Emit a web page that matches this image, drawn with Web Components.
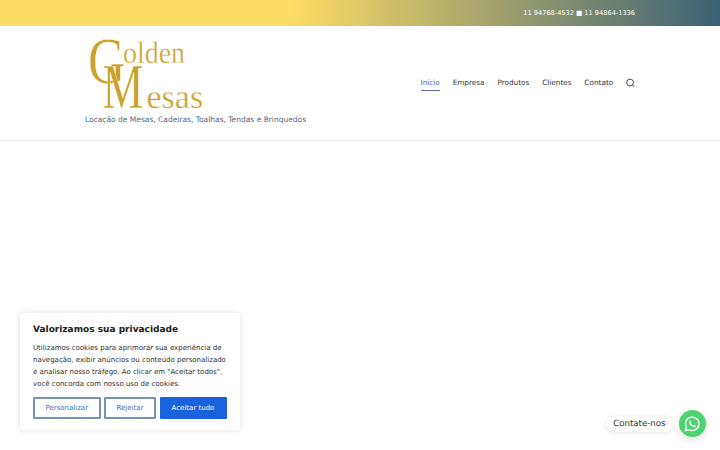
<!DOCTYPE html>
<html lang="pt"><head><meta charset="utf-8"><style>
html,body{margin:0;padding:0;background:#fff;font-family:"DejaVu Sans",sans-serif;overflow:hidden;text-rendering:geometricPrecision}
body{width:720px;height:450px;position:relative}
</style></head><body>
<gm-topbar>11 94768-4532 ■ 11 94864-1336</gm-topbar>
<gm-header></gm-header>
<gm-cookie></gm-cookie>
<gm-chat></gm-chat>
<script>
function def(n,html){customElements.define(n,class extends HTMLElement{constructor(){super();this.attachShadow({mode:'open'}).innerHTML=html}})}
def('gm-topbar',`<style>:host{display:flex;justify-content:flex-end;align-items:center;box-sizing:border-box;height:26px;padding:0 85px 0 0;background:linear-gradient(90deg,#ffdd65 0%,#ffdd65 40%,#3a6175 100%);color:#fff;font-size:6.6px}</style><slot></slot>`);
def('gm-logo',`<style>:host{display:block;width:125px;height:76px}svg{display:block;overflow:visible}
text{font-family:"Liberation Serif",serif;fill:#cda22c;stroke:#fff;stroke-width:.35px}</style>
<svg width="125" height="76" viewBox="0 0 125 76">
<text transform="translate(1 47) scale(.78 1)" font-size="66">G</text>
<text transform="translate(36 27) scale(.9 1)" font-size="31">olden</text>
<text transform="translate(15.500 72) scale(.72 1)" font-size="64">M</text>
<text x="59.500" y="72" font-size="34">esas</text>
</svg>`);
def('gm-header',`<style>:host{display:flex;justify-content:space-between;box-sizing:border-box;height:115px;padding:0 85px;border-bottom:1px solid #f0f1f3}
.brand{display:flex;flex-direction:column;align-items:flex-start;padding-top:10px}
gm-logo{margin-left:2px}
.tag{font-size:7.5px;line-height:10px;color:#5a6478;margin-top:3px;white-space:nowrap}
nav{display:flex;align-items:center;gap:12.8px;font-size:7.3px;color:#2f343c;height:113px}
a{display:block;padding:4px 0 3px;border-bottom:1.500px solid transparent}
a.on{color:#4d5ea8;border-bottom-color:#5b6ba8}
svg.s{display:block;margin-top:1px}
</style>
<div class="brand"><gm-logo></gm-logo>
<div class="tag">Locação de Mesas, Cadeiras, Toalhas, Tendas e Brinquedos</div></div>
<nav><a class="on">Início</a><a>Empresa</a><a>Produtos</a><a>Clientes</a><a>Contato</a>
<svg class="s" width="9" height="10" viewBox="0 0 10 10" fill="none" stroke="#2f343c" stroke-width="1"><circle cx="4.500" cy="4.500" r="3.800"/><path d="M7.300 7.300 L9.500 9.500"/></svg></nav>`);
def('gm-cookie',`<style>:host{position:absolute;left:20px;top:313px;width:220px;height:117px;box-sizing:border-box;background:#fff;padding:11px 13px;border-radius:3px;box-shadow:0 0 6px rgba(0,0,0,.12);color:#212121}
h2{margin:0 0 6px;font-size:9px;line-height:12px;font-weight:700}
p{margin:0 0 7px;font-size:7px;line-height:12px;white-space:nowrap;color:#2c2c2c}
.b{display:flex;gap:3.500px}
button{box-sizing:border-box;height:22px;font:7px "DejaVu Sans",sans-serif;text-rendering:geometricPrecision;border:2px solid #7a93b5;background:#fff;color:#3b6dbd;padding:0;border-radius:1px}
.p{width:67.500px}.r{width:52px}.a{width:67px;background:#1863dc;border-color:#1863dc;color:#fff}
</style><h2>Valorizamos sua privacidade</h2>
<p>Utilizamos cookies para aprimorar sua experiência de<br>navegação, exibir anúncios ou conteúdo personalizado<br>e analisar nosso tráfego. Ao clicar em "Aceitar todos",<br>você concorda com nosso uso de cookies.</p>
<div class="b"><button class="p">Personalizar</button><button class="r">Rejeitar</button><button class="a">Aceitar tudo</button></div>`);
def('gm-chat',`<style>:host{position:absolute;right:14.500px;top:410px;display:flex;align-items:center;gap:5.500px}
.l{height:16px;display:flex;align-items:center;padding:0 7.500px;background:#fff;border-radius:8px;font-size:8.6px;color:#333;box-shadow:0 1px 4px rgba(0,0,0,.1)}
.c{width:27px;height:27px;border-radius:50%;background:#4dd471;display:flex;align-items:center;justify-content:center;box-shadow:0 3px 8px rgba(0,0,0,.12)}
</style><div class="l">Contate-nos</div><div class="c"><svg width="18" height="18" viewBox="0 0 24 24" fill="none"><path d="M3 21 L4.400 16.200 A9 9 0 1 1 7.800 19.600 Z" stroke="#fff" stroke-width="1.800" stroke-linejoin="round"/><path d="M8.800 7.500 C8 8.200 7.800 9.300 8.300 10.500 C9.300 13 11.200 14.900 13.700 15.800 C14.900 16.200 16 16 16.600 15.200 L17 14.300 L14.900 13.200 L14 14.100 C12.500 13.500 11 12 10.300 10.400 L11.100 9.500 L10.100 7.400 Z" fill="#fff"/></svg></div>`);
</script></body></html>
